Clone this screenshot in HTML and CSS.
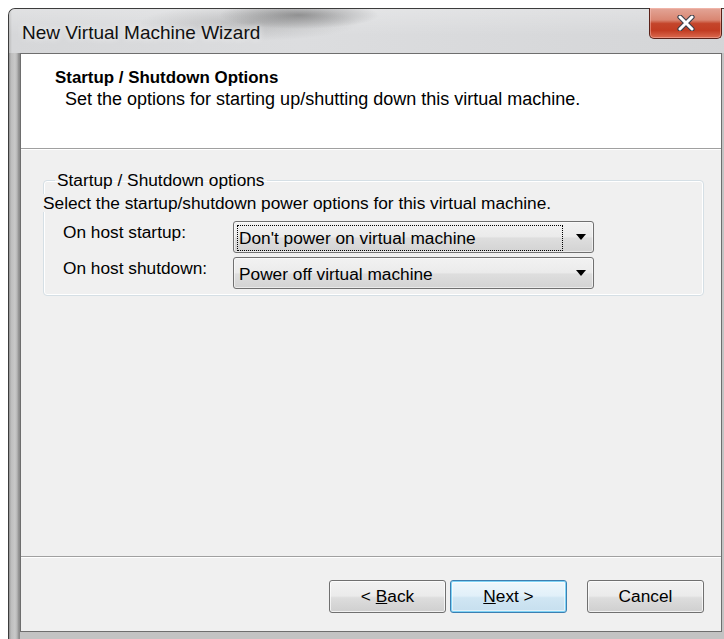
FILE: index.html
```html
<!DOCTYPE html>
<html lang="en">
<head>
<meta charset="utf-8">
<title>New Virtual Machine Wizard</title>
<link rel="stylesheet" href="styles.css">
</head>
<body>
<div class="window">
  <div class="titlebar">
    <span class="title">New Virtual Machine Wizard</span>
    <div class="close-btn" aria-label="Close">
      <svg width="20" height="16" viewBox="0 0 20 16">
        <path d="M4 2 L16 14 M16 2 L4 14" stroke="#3b3f4a" stroke-width="5.2" stroke-linecap="round" fill="none"/>
        <path d="M4 2 L16 14 M16 2 L4 14" stroke="#ffffff" stroke-width="3" stroke-linecap="round" fill="none"/>
      </svg>
    </div>
  </div>

  <div class="client">
    <div class="page-header">
      <div class="page-title">Startup / Shutdown Options</div>
      <div class="page-subtitle">Set the options for starting up/shutting down this virtual machine.</div>
    </div>

    <div class="page-body">
      <fieldset class="group">
        <legend class="group-legend">Startup / Shutdown options</legend>
        <div class="group-hint">Select the startup/shutdown power options for this virtual machine.</div>

        <div class="field-row">
          <span class="field-label">On host startup:</span>
          <div class="combo focused">
            <span class="combo-text">Don't power on virtual machine</span>
            <svg class="combo-arrow" width="10" height="6" viewBox="0 0 10 6"><polygon points="0,0 10,0 5,6" fill="#000"/></svg>
          </div>
        </div>

        <div class="field-row">
          <span class="field-label">On host shutdown:</span>
          <div class="combo">
            <span class="combo-text">Power off virtual machine</span>
            <svg class="combo-arrow" width="10" height="6" viewBox="0 0 10 6"><polygon points="0,0 10,0 5,6" fill="#000"/></svg>
          </div>
        </div>
      </fieldset>
    </div>

    <div class="page-footer">
      <button class="btn">&lt; <u>B</u>ack</button>
      <button class="btn btn-default"><u>N</u>ext &gt;</button>
      <button class="btn btn-cancel">Cancel</button>
    </div>
  </div>
</div>
</body>
</html>
```

FILE: styles.css
```css
html, body {
  margin: 0;
  padding: 0;
}

body {
  width: 724px;
  height: 639px;
  overflow: hidden;
  background: #ffffff;
  font-family: "Liberation Sans", Arial, sans-serif;
  color: #000;
}

/* Aero-style window frame */
.window {
  box-sizing: border-box;
  margin: 8px 0 0 8px;
  width: 730px;
  height: 640px;
  border: 1px solid #3c3c3c;
  border-right: none;
  border-bottom: none;
  border-top-left-radius: 7px;
  padding: 0 0 0 11px;
  display: flex;
  flex-direction: column;
  background:
    radial-gradient(ellipse 40px 6px at 120px 638px, rgba(80, 80, 80, 0.35), rgba(80, 80, 80, 0) 100%),
    radial-gradient(ellipse 50px 6px at 210px 638px, rgba(80, 80, 90, 0.35), rgba(80, 80, 90, 0) 100%),
    linear-gradient(90deg, #8f8f8f 0px, #bdbdbd 2px, #c9c9c9 6px, #b7b7b7 8px, #8c8c8c 10px, #8c8c8c 11px, #c3c3c3 11px);
}

.titlebar {
  height: 44px;
  flex: none;
  margin-left: -11px;
  padding-left: 13px;
  display: flex;
  align-items: flex-start;
  border-top-left-radius: 6px;
  background:
    radial-gradient(ellipse 80px 14px at 290px 6px, rgba(60, 60, 60, 0.45), rgba(60, 60, 60, 0) 100%),
    radial-gradient(ellipse 110px 18px at 240px 14px, rgba(110, 110, 110, 0.3), rgba(110, 110, 110, 0) 100%),
    linear-gradient(180deg, rgba(255, 255, 255, 0.25), rgba(255, 255, 255, 0) 60%),
    linear-gradient(90deg, #b9b9b9 0px, #d6d7d9 3px, #dcdddf 40%, #d4d5d7 100%);
}

.title {
  margin-top: 14px;
  font-size: 19px;
  line-height: 20px;
  color: #111;
  text-shadow: 0 0 6px rgba(255, 255, 255, 0.9);
}

.close-btn {
  box-sizing: border-box;
  margin: -1px 16px 0 auto;
  width: 73px;
  height: 31px;
  border: 1px solid #5a2118;
  border-top: none;
  border-radius: 0 0 5px 5px;
  display: flex;
  align-items: center;
  justify-content: center;
  box-shadow: inset 0 0 0 1px rgba(255, 200, 190, 0.45);
  background: linear-gradient(180deg, #e3a597 0%, #d98672 40%, #c4452b 52%, #c23c22 75%, #db6a4f 100%);
}

/* Dialog client area */
.client {
  box-sizing: border-box;
  width: 702px;
  height: 579px;
  flex: none;
  border: 1px solid #6e6e6e;
  background: #f0f0f0;
  display: flex;
  flex-direction: column;
  font-size: 17.3px;
}

.page-header {
  box-sizing: border-box;
  height: 95px;
  flex: none;
  background: #ffffff;
  border-bottom: 1px solid #a0a0a0;
  padding: 14px 0 0 34px;
}

.page-title {
  font-weight: bold;
  font-size: 16.9px;
  line-height: 20px;
}

.page-subtitle {
  margin-top: 1px;
  padding-left: 10px;
  font-size: 18px;
  line-height: 20px;
}

.page-body {
  flex: 1;
  border-top: 1px solid #ffffff;
  padding: 21px 0 0 22px;
}

.group {
  box-sizing: border-box;
  width: 661px;
  margin: 0;
  padding: 0 0 6px 0;
  border: 1px solid #d5dfe5;
  border-radius: 4px;
  box-shadow: inset 0 0 0 1px #ffffff;
}

.group-legend {
  margin-left: 11px;
  padding: 0 2px;
  font-size: 17.3px;
  line-height: 18px;
}

.group-hint {
  display: inline-block;
  margin: 5px 0 0 -1px;
  background: #f0f0f0;
  line-height: 18px;
}

.field-row {
  display: flex;
  align-items: flex-start;
  margin-top: 7px;
}

.field-row + .field-row {
  margin-top: 4px;
}

.field-label {
  box-sizing: border-box;
  width: 189px;
  padding: 2px 0 0 19px;
  line-height: 18px;
}

.combo {
  position: relative;
  box-sizing: border-box;
  width: 361px;
  height: 32px;
  border: 1px solid #707070;
  border-radius: 3px;
  padding-left: 5px;
  display: flex;
  align-items: center;
  box-shadow: inset 0 0 0 1px rgba(255, 255, 255, 0.55);
  background: linear-gradient(180deg, #f2f2f2 0%, #ebebeb 48%, #dedede 54%, #d3d3d3 100%);
}

.combo-text {
  line-height: 18px;
  padding-top: 1px;
}

.combo-arrow {
  margin-left: auto;
  margin-right: 7px;
}

/* keyboard focus rectangle over the selected item */
.combo.focused::before {
  content: "";
  position: absolute;
  left: 3px;
  top: 3px;
  width: 326px;
  height: 26px;
  box-sizing: border-box;
  border: 1px dotted #000;
}

.page-footer {
  box-sizing: border-box;
  height: 75px;
  flex: none;
  border-top: 1px solid #a0a0a0;
  box-shadow: inset 0 1px 0 #ffffff;
  display: flex;
  justify-content: flex-end;
  align-items: flex-start;
  padding: 23px 17px 0 0;
}

.btn {
  box-sizing: border-box;
  width: 117px;
  height: 33px;
  margin: 0;
  padding: 0;
  border: 1px solid #707070;
  border-radius: 3px;
  font-family: "Liberation Sans", Arial, sans-serif;
  font-size: 17.3px;
  color: #000;
  box-shadow: inset 0 0 0 1px rgba(255, 255, 255, 0.7);
  background: linear-gradient(180deg, #f2f2f2 0%, #ebebeb 48%, #dddddd 54%, #cfcfcf 100%);
}

.btn + .btn {
  margin-left: 4px;
}

.btn-default {
  border-color: #3c7fb1;
  box-shadow: inset 0 0 0 1px #7fd3f6, inset 0 0 0 2px rgba(255, 255, 255, 0.5);
  background: linear-gradient(180deg, #eef7fc 0%, #e1f0f9 48%, #d0e6f3 54%, #c6dfee 100%);
}

.btn.btn-cancel {
  margin-left: 20px;
}
```
